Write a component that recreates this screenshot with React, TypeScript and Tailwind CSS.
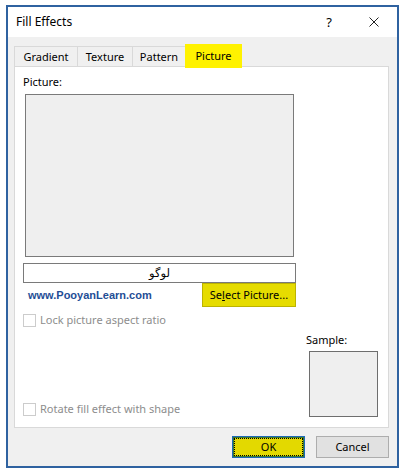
import { ReactNode } from 'react';

const tabs = [
  { label: 'Gradient', width: 'w-[63px]' },
  { label: 'Texture', width: 'w-[55px]' },
  { label: 'Pattern', width: 'w-[53px]' }
];

function Checkbox({ children }: { children: ReactNode }) {
  return (
    <div className="flex items-center gap-[4px] text-[#8d8d8d]">
      <span className="h-[13px] w-[13px] border border-[#cccccc] bg-white" />
      <span>{children}</span>
    </div>
  );
}

export default function App() {
  return (
    <div
      className="h-[474px] w-[405px] bg-white pl-[6px] pt-[5px] text-[11px] leading-[16px] text-black"
      style={{ fontFamily: '"Segoe UI", "Noto Sans", "Open Sans", sans-serif' }}
    >
      <div className="flex h-[463px] w-[393px] flex-col border-2 border-[#2f62a0] bg-white">
        {/* title bar */}
        <div className="flex h-[30px] items-center justify-between pl-[8px] pr-[18px]">
          <span className="text-[12px]">Fill Effects</span>
          <div className="flex items-center gap-[33px]">
            <span className="w-[14px] text-center text-[13px]">?</span>
            <svg width="10" height="10" viewBox="0 0 10 10" className="stroke-[#222]">
              <path d="M0.5 0.5 L9.5 9.5 M9.5 0.5 L0.5 9.5" strokeWidth="1" fill="none" />
            </svg>
          </div>
        </div>

        {/* body */}
        <div className="flex flex-1 flex-col bg-[#f0f0f0] pl-[6px] pr-[8px] pt-[7px]">
          <div className="flex h-[22px] items-end">
            {tabs.map((t) => (
              <div
                key={t.label}
                className={`${t.width} flex h-[20px] items-center justify-center border-l border-t border-[#d9d9d9]`}
              >
                {t.label}
              </div>
            ))}
            <div className="relative z-10 -mb-[2px] flex h-[24px] w-[57px] items-center justify-center bg-[#fff200]">
              Picture
            </div>
          </div>

          <div className="flex h-[362px] w-[375px] flex-col border border-[#d9d9d9] bg-white pl-[8px]">
            <div className="pt-[7px]">Picture:</div>
            <div className="ml-[2px] mt-[4px] h-[163px] w-[269px] border border-[#7a7a7a] bg-[#efefef]" />
            <div
              className="mt-[6px] flex h-[20px] w-[273px] items-center justify-center border border-[#7a7a7a] bg-white text-[11.5px]"
              style={{ fontFamily: '"DejaVu Sans", sans-serif' }}
              dir="rtl"
            >
              لوگو
            </div>
            <div className="flex w-[273px] items-center justify-between">
              <span
                className="pl-[5px] text-[11px] font-bold text-[#1f4e96]"
                style={{ fontFamily: '"Liberation Sans", Arial, sans-serif' }}
              >
                www.PooyanLearn.com
              </span>
              <div className="flex h-[24px] w-[94px] items-center justify-center border border-[#bcb300] bg-[#e6dc00]">
                <span>
                  Se<span className="underline">l</span>ect Picture...
                </span>
              </div>
            </div>
            <div className="mt-[5px]">
              <Checkbox>Lock picture aspect ratio</Checkbox>
            </div>

            <div className="mt-auto flex items-end justify-between pb-[10px] pr-[10px]">
              <Checkbox>Rotate fill effect with shape</Checkbox>
              <div className="flex flex-col">
                <span className="-ml-[3px]">Sample:</span>
                <div className="mt-[3px] h-[66px] w-[69px] border border-[#6e6e6e] bg-[#efefef]" />
              </div>
            </div>
          </div>

          <div className="mt-[8px] flex justify-end gap-[11px]">
            <div className="flex h-[22px] w-[73px] items-center justify-center border border-[#1c68b8] bg-[#e3d900] p-[1px] shadow-[inset_0_0_0_1px_#3d7a2a]">
              <div className="flex h-full w-full items-center justify-center border border-dotted border-black">
                OK
              </div>
            </div>
            <div className="flex h-[22px] w-[73px] items-center justify-center border border-[#adadad] bg-[#e1e1e1]">
              Cancel
            </div>
          </div>
        </div>
      </div>
    </div>
  );
}
